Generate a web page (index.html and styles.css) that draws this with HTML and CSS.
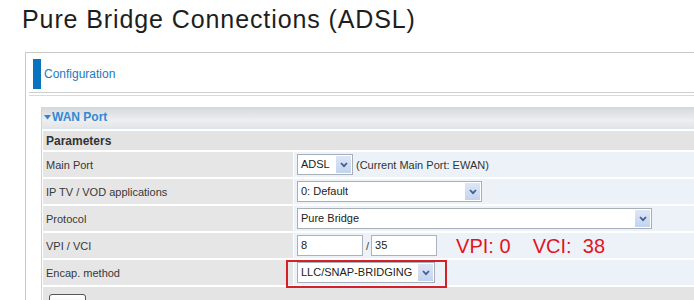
FILE: index.html
```html
<!DOCTYPE html>
<html>
<head>
<meta charset="utf-8">
<title>Pure Bridge Connections (ADSL)</title>
<link rel="stylesheet" href="styles.css">
</head>
<body>
<h1 class="title">Pure Bridge Connections (ADSL)</h1>
<div class="panel">
  <div class="cfg-head"><span class="bar"></span><span class="cfg-title">Configuration</span></div>
  <div class="rule"></div>
  <div class="rule rule2"></div>
  <div class="section">
    <div class="wan-head"><svg class="tri" width="7" height="5" viewBox="0 0 7 5"><path d="M0 0H7L3.5 4.5Z" fill="#2f86d0"/></svg>WAN Port</div>
    <div class="grid">
      <div class="params">Parameters</div>

      <div class="lbl">Main Port</div>
      <div class="val">
        <div class="sel w-main"><span class="txt">ADSL</span><span class="arr"><svg width="8" height="6" viewBox="0 0 8 6"><path d="M1 1L4 4.2L7 1" fill="none" stroke="#3c5f95" stroke-width="1.8"/></svg></span></div>
        <span class="note">(Current Main Port: EWAN)</span>
      </div>

      <div class="lbl">IP TV / VOD applications</div>
      <div class="val">
        <div class="sel w-iptv"><span class="txt">0: Default</span><span class="arr"><svg width="8" height="6" viewBox="0 0 8 6"><path d="M1 1L4 4.2L7 1" fill="none" stroke="#3c5f95" stroke-width="1.8"/></svg></span></div>
      </div>

      <div class="lbl">Protocol</div>
      <div class="val">
        <div class="sel w-proto"><span class="txt">Pure Bridge</span><span class="arr"><svg width="8" height="6" viewBox="0 0 8 6"><path d="M1 1L4 4.2L7 1" fill="none" stroke="#3c5f95" stroke-width="1.8"/></svg></span></div>
      </div>

      <div class="lbl">VPI / VCI</div>
      <div class="val">
        <div class="inp">8</div><span class="slash">/</span><div class="inp">35</div>
        <span class="red">VPI: 0    VCI:  38</span>
      </div>

      <div class="lbl">Encap. method</div>
      <div class="val rel">
        <div class="sel w-encap"><span class="txt">LLC/SNAP-BRIDGING</span><span class="arr"><svg width="8" height="6" viewBox="0 0 8 6"><path d="M1 1L4 4.2L7 1" fill="none" stroke="#3c5f95" stroke-width="1.8"/></svg></span></div>
        <div class="mark"></div>
      </div>

      <div class="btn-row"><button class="btn">Apply</button></div>
    </div>
  </div>
</div>
</body>
</html>
```
FILE: styles.css
```css
html, body {
  margin: 0;
  padding: 0;
  background: #fff;
}
body {
  width: 694px;
  height: 300px;
  overflow: hidden;
  font-family: "Liberation Sans", Arial, sans-serif;
}
.title {
  margin: 0;
  padding: 4px 0 0 22px;
  font-size: 25px;
  letter-spacing: 0.9px;
  line-height: 30px;
  font-weight: normal;
  color: #1e1e1e;
  white-space: nowrap;
}
.panel {
  margin: 18px 0 0 25px;
  width: 720px;
  border: 1px solid #c9c9c9;
  border-right: 0;
  height: 400px;
}
.cfg-head {
  display: flex;
  align-items: center;
  padding: 6px 0 3px 7px;
}
.bar {
  width: 8px;
  height: 30px;
  background: #0a73c0;
}
.cfg-title {
  margin-left: 3px;
  font-size: 12px;
  color: #2478be;
}
.rule {
  margin-left: 3px;
  border-top: 1px solid #cfcfcf;
}
.rule2 {
  margin-top: 2px;
  border-top-color: #dadada;
}
.section {
  margin: 11px 0 0 15px;
  border-left: 1px solid #c9d5e2;
}
.wan-head {
  height: 20px;
  line-height: 20px;
  padding-left: 2px;
  background: linear-gradient(#d5d8db, #eceeef 65%, #e4e6e8);
  border-bottom: 2px solid #dce6f1;
  margin-bottom: 2px;
  font-size: 12px;
  font-weight: bold;
  color: #3389d4;
  display: flex;
  align-items: center;
}
.tri {
  margin-right: 1px;
}
.grid {
  display: grid;
  grid-template-columns: 250px 1fr;
  gap: 2px 1px;
  margin-left: 1px;
}
.params {
  grid-column: 1 / -1;
  height: 19px;
  line-height: 20px;
  padding-left: 3px;
  background: #e3e3e3;
  font-size: 12px;
  font-weight: bold;
  color: #333;
}
.lbl {
  height: 25px;
  line-height: 26px;
  padding-left: 3px;
  background: #e6e6e6;
  font-size: 11px;
  color: #383838;
}
.val {
  height: 25px;
  display: flex;
  align-items: center;
  padding-left: 3px;
  background: #edf2f9;
  font-size: 11px;
  color: #222;
}
.rel {
  position: relative;
}
.sel {
  box-sizing: border-box;
  height: 21px;
  display: flex;
  border: 1px solid #a7afb9;
  background: #fff;
}
.sel .txt {
  flex: 1;
  padding-left: 3px;
  line-height: 19px;
  white-space: nowrap;
}
.sel .arr {
  width: 15px;
  margin: 1px;
  background: linear-gradient(#dde6f6, #c4d3ee);
  display: flex;
  align-items: center;
  justify-content: center;
}
.w-main { width: 56px; }
.w-iptv { width: 185px; }
.w-proto { width: 355px; }
.w-encap { width: 138px; }
.note {
  margin-left: 3px;
  color: #333;
}
.inp {
  box-sizing: border-box;
  width: 66px;
  height: 21px;
  line-height: 19px;
  padding-left: 3px;
  border: 1px solid #a9b2bd;
  background: #fff;
}
.slash {
  margin: 0 2px 0 3px;
  color: #444;
}
.red {
  margin-left: 19px;
  font-size: 20px;
  line-height: 20px;
  color: #e3141d;
  white-space: pre;
}
.mark {
  position: absolute;
  left: -8px;
  top: 0;
  width: 161px;
  height: 28px;
  box-sizing: border-box;
  border: 2px solid #d42029;
}
.btn-row {
  grid-column: 1 / -1;
  height: 30px;
  padding: 7px 0 0 6px;
  background: #e4e4e4;
  box-sizing: border-box;
}
.btn {
  width: 37px;
  height: 20px;
  padding: 0;
  border: 1px solid #555;
  border-radius: 3px;
  background: linear-gradient(#ffffff, #e6e6e6);
  font-family: "Liberation Sans", Arial, sans-serif;
  font-size: 11px;
  color: #222;
}
```
